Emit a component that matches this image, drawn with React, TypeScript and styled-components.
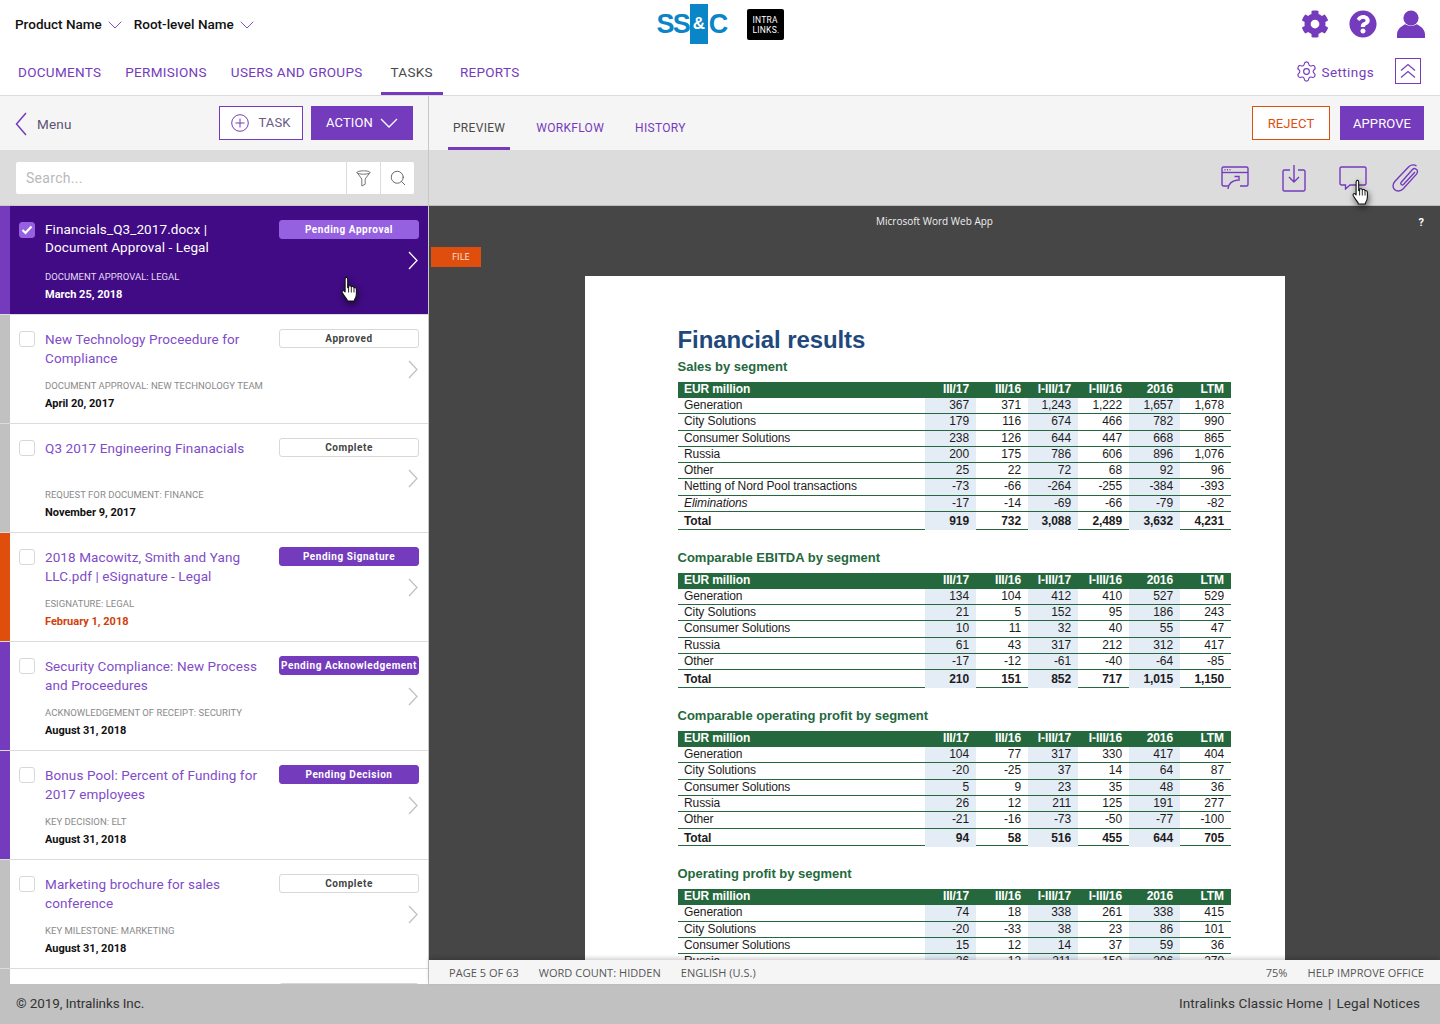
import React from 'react';
import styled, {createGlobalStyle} from 'styled-components';
import {Settings, Search, ChevronDown} from 'lucide-react';
import {FaCog, FaQuestionCircle} from 'react-icons/fa';

const purple = '#753bbd';
const lightPurple = '#9661e0';
const darkPurple = '#400b84';
const orange = '#e04e0e';
const uiFont = 'Roboto, "Noto Sans", sans-serif';
const docFont = '"Liberation Sans", Arial, sans-serif';

const GlobalStyle = createGlobalStyle`
  html, body {
    margin: 0;
    padding: 0;
    background: #fff;
  }
  * {
    box-sizing: border-box;
  }
`;

const Shell = styled.div`
  width: 1440px;
  height: 1024px;
  display: flex;
  flex-direction: column;
  overflow: hidden;
  position: relative;
  font-family: ${uiFont};
`;

const Header = styled.header`
  height: 96px;
  flex-shrink: 0;
  background: #fff;
  border-bottom: 1px solid #dcdcdc;
`;

const TopRow = styled.div`
  height: 48px;
  display: grid;
  grid-template-columns: 1fr auto 1fr;
  align-items: center;
  padding: 0 15px;
`;

const Crumbs = styled.div`
  display: flex;
  align-items: center;
`;

const Crumb = styled.span`
  display: flex;
  align-items: center;
  font-size: 13.5px;
  font-weight: 500;
  color: #111;
  margin-right: 7px;
  svg {
    color: ${purple};
    margin-left: 1px;
    margin-top: 2px;
  }
`;

const Logo = styled.div`
  display: flex;
  align-items: center;
  height: 40px;
`;

const LogoText = styled.span`
  font-family: ${docFont};
  font-weight: 700;
  font-size: 27px;
  letter-spacing: -1.8px;
  color: #0a85c7;
`;

const LogoBox = styled.span`
  width: 18px;
  height: 40px;
  margin-left: 1px;
  margin-right: 1px;
  background: #0a85c7;
  color: #fff;
  font-family: ${docFont};
  font-weight: 700;
  font-size: 17px;
  display: flex;
  align-items: center;
  justify-content: center;
`;

const LinksBox = styled.span`
  width: 37px;
  height: 31px;
  margin-left: 20px;
  background: #000;
  border-radius: 2px;
  color: #fff;
  font-family: ${uiFont};
  font-size: 8.5px;
  line-height: 10px;
  padding: 6px 0 0 6px;
  letter-spacing: 0.2px;
`;

const UserIcons = styled.div`
  display: flex;
  justify-content: flex-end;
  align-items: center;
  gap: 20px;
  color: ${purple};
  svg {
    display: block;
  }
`;

const NavRow = styled.div`
  height: 47px;
  display: flex;
  align-items: stretch;
  padding: 0 19px 0 8px;
`;

const NavTab = styled.a<{$active?: boolean}>`
  display: flex;
  align-items: center;
  padding: 3px 10px 0;
  margin-left: ${({$active}) => ($active ? '4px' : '0')};
  margin-right: ${({$active}) => ($active ? '7px' : '4px')};
  font-size: 13.5px;
  letter-spacing: 0.3px;
  color: ${({$active}) => ($active ? '#4a4a4a' : purple)};
  border-bottom: 3px solid ${({$active}) => ($active ? purple : 'transparent')};
`;

const NavRight = styled.div`
  margin-left: auto;
  display: flex;
  align-items: center;
  color: ${purple};
  font-size: 13.5px;
  letter-spacing: 0.4px;
  padding-bottom: 2px;
`;

const SettingsLink = styled.span`
  display: flex;
  align-items: center;
  gap: 4px;
  margin-right: 21px;
  margin-top: 2px;
`;

const CollapseBox = styled.span`
  width: 26px;
  height: 26px;
  border: 1px solid ${purple};
  display: flex;
  align-items: center;
  justify-content: center;
`;

const Main = styled.main`
  flex: 1;
  min-height: 0;
  display: flex;
`;

const Sidebar = styled.aside`
  width: 429px;
  flex-shrink: 0;
  display: flex;
  flex-direction: column;
  border-right: 1px solid #c8c8c8;
  background: #fff;
`;

const SideBar = styled.div`
  height: 54px;
  flex-shrink: 0;
  background: #f5f5f5;
  display: flex;
  align-items: center;
  padding: 0 15px;
`;

const BackLink = styled.span`
  display: flex;
  align-items: center;
  gap: 10px;
  font-size: 13.5px;
  color: #5f5273;
  letter-spacing: 0.2px;
  margin-top: 2px;
`;

const SideActions = styled.div`
  margin-left: auto;
  display: flex;
  gap: 8px;
  margin-top: -1px;
`;

const Button = styled.button<{$variant: 'outline' | 'solid' | 'danger'}>`
  height: 34px;
  display: flex;
  align-items: center;
  justify-content: center;
  font-family: ${uiFont};
  font-size: 13px;
  letter-spacing: 0.1px;
  cursor: pointer;
  background: ${({$variant}) => ($variant === 'solid' ? purple : '#fff')};
  color: ${({$variant}) =>
    $variant === 'solid' ? '#fff' : $variant === 'danger' ? orange : '#6a5a85'};
  border: 1px solid ${({$variant}) => ($variant === 'danger' ? orange : purple)};
  padding: 0;
`;

const TaskButton = styled(Button)`
  width: 84px;
  gap: 9px;
`;

const ActionButton = styled(Button)`
  width: 102px;
  gap: 7px;
`;

const SearchBand = styled.div`
  height: 56px;
  flex-shrink: 0;
  background: #dcdcdc;
  border-bottom: 1px solid #c8c8c8;
  padding: 12px 14px 0 16px;
`;

const SearchField = styled.div`
  height: 32px;
  background: #fff;
  border-radius: 2px;
  display: flex;
  align-items: stretch;
`;

const SearchInput = styled.span`
  flex: 1;
  display: flex;
  align-items: center;
  padding-left: 10px;
  font-size: 14px;
  letter-spacing: 0.3px;
  color: #b9b9b9;
`;

const SearchCell = styled.span`
  width: 34px;
  display: flex;
  align-items: center;
  justify-content: center;
  border-left: 1px solid #dcdcdc;
  color: #666;
`;

const TaskList = styled.div`
  flex: 1;
  min-height: 0;
  overflow: hidden;
`;

const TaskRow = styled.div<{$selected?: boolean}>`
  height: 109px;
  display: flex;
  background: ${({$selected}) => ($selected ? darkPurple : '#fff')};
  border-bottom: 1px solid #dcdcdc;
`;

const StatusStripe = styled.div<{$color: string}>`
  width: 10px;
  flex-shrink: 0;
  background: ${({$color}) => $color};
`;

const TaskBody = styled.div`
  flex: 1;
  display: grid;
  grid-template-columns: 16px 1fr 140px;
  column-gap: 10px;
  padding: 15px 9px 0;
`;

const Check = styled.span<{$checked?: boolean}>`
  width: 16px;
  height: 16px;
  margin-top: 1px;
  border-radius: 3px;
  display: flex;
  align-items: center;
  justify-content: center;
  background: ${({$checked}) => ($checked ? lightPurple : '#fff')};
  border: 1px solid ${({$checked}) => ($checked ? lightPurple : '#d8d8d8')};
`;

const TaskText = styled.div`
  min-width: 0;
`;

const TaskTitle = styled.div<{$selected?: boolean}>`
  height: 46px;
  font-size: 13.5px;
  letter-spacing: 0.1px;
  line-height: ${({$selected}) => ($selected ? '17.5px' : '19px')};
  color: ${({$selected}) => ($selected ? '#fff' : '#7f4cc8')};
`;

const TaskMeta = styled.div<{$selected?: boolean}>`
  margin-top: 3px;
  font-size: 9.5px;
  line-height: 14px;
  letter-spacing: 0.03px;
  text-transform: uppercase;
  color: ${({$selected}) => ($selected ? '#e6dcf5' : '#8a8a8a')};
`;

const TaskDate = styled.div<{$color: string}>`
  margin-top: 3px;
  font-size: 11px;
  font-weight: 700;
  line-height: 16px;
  color: ${({$color}) => $color};
`;

const TaskSide = styled.div`
  display: flex;
  flex-direction: column;
  align-items: flex-end;
  margin-top: -1px;
`;

const Badge = styled.span<{$tone: 'light' | 'solid' | 'plain'}>`
  width: 140px;
  height: 19px;
  border-radius: 3px;
  display: flex;
  align-items: center;
  justify-content: center;
  white-space: nowrap;
  font-size: 10px;
  font-weight: 700;
  letter-spacing: 0.55px;
  background: ${({$tone}) => ($tone === 'light' ? lightPurple : $tone === 'solid' ? purple : '#fff')};
  color: ${({$tone}) => ($tone === 'plain' ? '#444' : '#fff')};
  border: 1px solid ${({$tone}) => ($tone === 'light' ? lightPurple : $tone === 'solid' ? purple : '#d8d8d8')};
`;

const RowChevron = styled.svg`
  margin-top: 12px;
  margin-right: 1px;
`;

const Content = styled.section`
  flex: 1;
  min-width: 0;
  display: flex;
  flex-direction: column;
`;

const TabBar = styled.div`
  height: 54px;
  flex-shrink: 0;
  background: #f5f5f5;
  display: flex;
  align-items: stretch;
  padding: 0 16px 0 19px;
`;

const DocTab = styled.a<{$active?: boolean}>`
  display: flex;
  align-items: center;
  padding: 13px 5px 0;
  margin-right: 21px;
  font-size: 12px;
  letter-spacing: 0.3px;
  color: ${({$active}) => ($active ? '#4a4a4a' : purple)};
  border-bottom: 3px solid ${({$active}) => ($active ? purple : 'transparent')};
`;

const TabActions = styled.div`
  margin-left: auto;
  display: flex;
  align-items: center;
  gap: 10px;
`;

const RejectButton = styled(Button)`
  width: 78px;
`;

const ApproveButton = styled(Button)`
  width: 84px;
`;

const IconBar = styled.div`
  height: 56px;
  flex-shrink: 0;
  background: #dcdcdc;
  border-bottom: 1px solid #bdbdbd;
  display: flex;
  align-items: center;
  justify-content: flex-end;
  gap: 31px;
  padding-right: 20px;
  color: ${purple};
  svg {
    display: block;
  }
`;

const ClipWrap = styled.span`
  margin-left: -6px;
`;

const Viewer = styled.div`
  flex: 1;
  min-height: 0;
  background: #464646;
  display: flex;
  flex-direction: column;
  position: relative;
`;

const ViewerTitle = styled.div`
  height: 30px;
  flex-shrink: 0;
  display: flex;
  align-items: center;
  justify-content: center;
  color: #f0f0f0;
  font-family: "Open Sans", sans-serif;
  font-size: 10px;
`;

const ViewerHelp = styled.span`
  position: absolute;
  top: 10px;
  right: 16px;
  color: #fff;
  font-size: 11px;
  font-weight: 700;
`;

const FileRow = styled.div`
  height: 20px;
  margin: 11px 0 9px 2px;
  flex-shrink: 0;
`;

const FileTab = styled.span`
  width: 50px;
  height: 20px;
  display: flex;
  align-items: center;
  justify-content: center;
  padding: 0 0 2px 10px;
  background: ${orange};
  color: #f6e3da;
  font-family: "Open Sans", sans-serif;
  font-size: 9.5px;
`;

const Page = styled.div`
  flex: 1;
  min-height: 0;
  width: 700px;
  align-self: center;
  overflow: hidden;
  background: #fff;
  padding: 50px 54px 0 93px;
  font-family: ${docFont};
`;

const DocTitle = styled.h1`
  margin: 0 0 5px;
  font-size: 24px;
  line-height: 28px;
  font-weight: 700;
  letter-spacing: -0.1px;
  color: #1f497d;
`;

const SectionBlock = styled.div`
  margin-bottom: 20.3px;
`;

const SectionTitle = styled.h2`
  margin: 0 0 7px;
  font-size: 13px;
  line-height: 16px;
  font-weight: 700;
  color: #25683d;
`;

const Row = styled.div<{$head?: boolean; $total?: boolean}>`
  display: grid;
  grid-template-columns: 247px 51px 52px 50px 51px 51px 51px;
  height: ${({$head, $total}) => ($head ? '16px' : $total ? '17.5px' : '16.3px')};
  background: ${({$head}) => ($head ? '#25683d' : 'transparent')};
  color: ${({$head}) => ($head ? '#fff' : '#1c1c1c')};
  font-weight: ${({$head, $total}) => ($head || $total ? 700 : 400)};
  border-bottom: 1px solid #25683d;
  font-size: 12px;
  letter-spacing: -0.1px;
  line-height: ${({$total}) => ($total ? '18px' : '15px')};
`;

const LabelCell = styled.div<{$italic?: boolean}>`
  padding-left: 6.5px;
  white-space: nowrap;
  font-style: ${({$italic}) => ($italic ? 'italic' : 'normal')};
`;

const NumCell = styled.div<{$shaded?: boolean}>`
  text-align: right;
  padding-right: 6.5px;
  white-space: nowrap;
  background: ${({$shaded}) => ($shaded ? '#e4ecf6' : 'transparent')};
`;

const HeadCell = styled.div`
  text-align: right;
  padding-right: 6.5px;
  white-space: nowrap;
`;

const StatusBar = styled.div`
  height: 24px;
  flex-shrink: 0;
  background: #f5f5f5;
  box-shadow: 0 -2px 4px rgba(0, 0, 0, 0.18);
  position: relative;
  display: flex;
  align-items: center;
  padding: 0 16px 0 20px;
  gap: 20px;
  font-family: "Open Sans", sans-serif;
  font-size: 11px;
  letter-spacing: 0.03px;
  color: #555;
`;

const StatusRight = styled.span`
  margin-left: auto;
`;

const Footer = styled.footer`
  height: 40px;
  flex-shrink: 0;
  background: #c1c1c1;
  display: flex;
  align-items: center;
  justify-content: space-between;
  padding: 0 20px 2px 16px;
  font-size: 13.5px;
  letter-spacing: 0.1px;
  color: #333;
`;

const FooterCopy = styled.span`
  letter-spacing: -0.1px;
`;

const FooterSep = styled.span`
  margin: 0 5px;
`;

const Pointer = styled.svg<{$left: number; $top: number}>`
  position: absolute;
  left: ${({$left}) => $left}px;
  top: ${({$top}) => $top}px;
  filter: drop-shadow(1px 3px 3px rgba(0, 0, 0, 0.55));
`;

const Hand = ({left, top}: {left: number; top: number}) => (
  <Pointer $left={left} $top={top} width="22" height="28" viewBox="0 0 22 28">
    <path
      d="M6 2.200c1 0 1.700.7 1.700 1.800v8.600l.9-.1v-1.400c1.200-.7 2.300-.3 2.700.6 1.200-.5 2.300-.1 2.700.9 1.300-.3 2.400.5 2.400 1.800v4.800c0 2.400-1 4.100-2 5.800v1H7.200v-1c-1.200-2.200-3.500-4.400-5-7.400-.6-1.300.8-2.600 2-1.700l.9 1V4c0-1.100.8-1.800 1.900-1.800z"
      fill="#fff"
      stroke="#111"
      strokeWidth="1.100"
      strokeLinejoin="round"
    />
    <path d="M8.600 12.500v5M11.300 11.800v5.700M14 12.700v4.800" stroke="#111" strokeWidth="0.9" fill="none" />
  </Pointer>
);

const Chevron = ({color}: {color: string}) => (
  <RowChevron width="10" height="19" viewBox="0 0 10 19" fill="none">
    <path d="M1 1l8 8.500L1 18" stroke={color} strokeWidth="1.300" />
  </RowChevron>
);

type BadgeTone = 'light' | 'solid' | 'plain';

interface Task {
  title: string;
  meta: string;
  date: string;
  badge: string;
  tone: BadgeTone;
  stripe: string;
  overdue?: boolean;
  selected?: boolean;
}

const tasks: Task[] = [
  {
    title: 'Financials_Q3_2017.docx | Document Approval - Legal',
    meta: 'Document Approval: Legal',
    date: 'March 25, 2018',
    badge: 'Pending Approval',
    tone: 'light',
    stripe: purple,
    selected: true,
  },
  {
    title: 'New Technology Proceedure for Compliance',
    meta: 'Document Approval: New Technology Team',
    date: 'April 20, 2017',
    badge: 'Approved',
    tone: 'plain',
    stripe: '#c1c1c1',
  },
  {
    title: 'Q3 2017 Engineering Finanacials',
    meta: 'Request for Document: Finance',
    date: 'November 9, 2017',
    badge: 'Complete',
    tone: 'plain',
    stripe: '#c1c1c1',
  },
  {
    title: '2018 Macowitz, Smith and Yang LLC.pdf | eSignature - Legal',
    meta: 'eSignature: Legal',
    date: 'February 1, 2018',
    badge: 'Pending Signature',
    tone: 'solid',
    stripe: orange,
    overdue: true,
  },
  {
    title: 'Security Compliance: New Process and Proceedures',
    meta: 'Acknowledgement of Receipt: Security',
    date: 'August 31, 2018',
    badge: 'Pending Acknowledgement',
    tone: 'solid',
    stripe: purple,
  },
  {
    title: 'Bonus Pool: Percent of Funding for 2017 employees',
    meta: 'Key Decision: ELT',
    date: 'August 31, 2018',
    badge: 'Pending Decision',
    tone: 'solid',
    stripe: purple,
  },
  {
    title: 'Marketing brochure for sales conference',
    meta: 'Key Milestone: Marketing',
    date: 'August 31, 2018',
    badge: 'Complete',
    tone: 'plain',
    stripe: '#c1c1c1',
  },
  {
    title: '',
    meta: '',
    date: '',
    badge: 'Complete',
    tone: 'plain',
    stripe: '#c1c1c1',
  },
];

const columns = ['III/17', 'III/16', 'I-III/17', 'I-III/16', '2016', 'LTM'];

interface DocRow {
  label: string;
  values: string[];
  italic?: boolean;
  total?: boolean;
}

interface DocSection {
  title: string;
  rows: DocRow[];
}

const sections: DocSection[] = [
  {
    title: 'Sales by segment',
    rows: [
      {label: 'Generation', values: ['367', '371', '1,243', '1,222', '1,657', '1,678']},
      {label: 'City Solutions', values: ['179', '116', '674', '466', '782', '990']},
      {label: 'Consumer Solutions', values: ['238', '126', '644', '447', '668', '865']},
      {label: 'Russia', values: ['200', '175', '786', '606', '896', '1,076']},
      {label: 'Other', values: ['25', '22', '72', '68', '92', '96']},
      {label: 'Netting of Nord Pool transactions', values: ['-73', '-66', '-264', '-255', '-384', '-393']},
      {label: 'Eliminations', values: ['-17', '-14', '-69', '-66', '-79', '-82'], italic: true},
      {label: 'Total', values: ['919', '732', '3,088', '2,489', '3,632', '4,231'], total: true},
    ],
  },
  {
    title: 'Comparable EBITDA by segment',
    rows: [
      {label: 'Generation', values: ['134', '104', '412', '410', '527', '529']},
      {label: 'City Solutions', values: ['21', '5', '152', '95', '186', '243']},
      {label: 'Consumer Solutions', values: ['10', '11', '32', '40', '55', '47']},
      {label: 'Russia', values: ['61', '43', '317', '212', '312', '417']},
      {label: 'Other', values: ['-17', '-12', '-61', '-40', '-64', '-85']},
      {label: 'Total', values: ['210', '151', '852', '717', '1,015', '1,150'], total: true},
    ],
  },
  {
    title: 'Comparable operating profit by segment',
    rows: [
      {label: 'Generation', values: ['104', '77', '317', '330', '417', '404']},
      {label: 'City Solutions', values: ['-20', '-25', '37', '14', '64', '87']},
      {label: 'Consumer Solutions', values: ['5', '9', '23', '35', '48', '36']},
      {label: 'Russia', values: ['26', '12', '211', '125', '191', '277']},
      {label: 'Other', values: ['-21', '-16', '-73', '-50', '-77', '-100']},
      {label: 'Total', values: ['94', '58', '516', '455', '644', '705'], total: true},
    ],
  },
  {
    title: 'Operating profit by segment',
    rows: [
      {label: 'Generation', values: ['74', '18', '338', '261', '338', '415']},
      {label: 'City Solutions', values: ['-20', '-33', '38', '23', '86', '101']},
      {label: 'Consumer Solutions', values: ['15', '12', '14', '37', '59', '36']},
      {label: 'Russia', values: ['26', '12', '211', '150', '206', '270']},
    ],
  },
];

const TaskItem = ({task}: {task: Task}) => {
  const {selected} = task;
  const dateColor = selected ? '#fff' : task.overdue ? '#d0400a' : '#111';
  return (
    <TaskRow $selected={selected}>
      <StatusStripe $color={task.stripe} />
      <TaskBody>
        <Check $checked={selected}>
          {selected && (
            <svg width="12" height="10" viewBox="0 0 12 10" fill="none">
              <path d="M1.500 5l3 3 6-6.500" stroke="#fff" strokeWidth="2.200" />
            </svg>
          )}
        </Check>
        <TaskText>
          <TaskTitle $selected={selected}>{task.title}</TaskTitle>
          <TaskMeta $selected={selected}>{task.meta}</TaskMeta>
          <TaskDate $color={dateColor}>{task.date}</TaskDate>
        </TaskText>
        <TaskSide>
          <Badge $tone={task.tone}>{task.badge}</Badge>
          <Chevron color={selected ? '#fff' : '#c1c1c1'} />
        </TaskSide>
      </TaskBody>
    </TaskRow>
  );
};

const SegmentTable = ({section}: {section: DocSection}) => (
  <SectionBlock>
    <SectionTitle>{section.title}</SectionTitle>
    <Row $head>
      <LabelCell>EUR million</LabelCell>
      {columns.map(c => <HeadCell key={c}>{c}</HeadCell>)}
    </Row>
    {section.rows.map(r => (
      <Row key={r.label} $total={r.total}>
        <LabelCell $italic={r.italic}>{r.label}</LabelCell>
        {r.values.map((v, i) => (
          <NumCell key={columns[i]} $shaded={i % 2 === 0}>{v}</NumCell>
        ))}
      </Row>
    ))}
  </SectionBlock>
);

const App = () => (
  <Shell>
    <GlobalStyle />
    <Header>
      <TopRow>
        <Crumbs>
          <Crumb>Product Name<ChevronDown size={24} strokeWidth={0.9} /></Crumb>
          <Crumb>Root-level Name<ChevronDown size={24} strokeWidth={0.9} /></Crumb>
        </Crumbs>
        <Logo>
          <LogoText>SS</LogoText>
          <LogoBox>&amp;</LogoBox>
          <LogoText>C</LogoText>
          <LinksBox>INTRA<br />LINKS.</LinksBox>
        </Logo>
        <UserIcons>
          <FaCog size={28} />
          <FaQuestionCircle size={28} />
          <svg width="28" height="28" viewBox="0 0 28 28" fill="currentColor">
            <circle cx="14" cy="8" r="7.600" />
            <path d="M0 28v-3.500C0 19 5 15.500 8.500 14.200c1.600 1 3.500 1.500 5.500 1.500s3.900-.5 5.500-1.500C23 15.500 28 19 28 24.500V28z" />
          </svg>
        </UserIcons>
      </TopRow>
      <NavRow>
        <NavTab>DOCUMENTS</NavTab>
        <NavTab>PERMISIONS</NavTab>
        <NavTab>USERS AND GROUPS</NavTab>
        <NavTab $active>TASKS</NavTab>
        <NavTab>REPORTS</NavTab>
        <NavRight>
          <SettingsLink><Settings size={23} strokeWidth={1.200} />Settings</SettingsLink>
          <CollapseBox>
            <svg width="16" height="16" viewBox="0 0 16 16" fill="none" stroke={purple} strokeWidth="1.200">
              <path d="M1 7.500l7-6 7 6M1 14.500l7-6 7 6" />
            </svg>
          </CollapseBox>
        </NavRight>
      </NavRow>
    </Header>
    <Main>
      <Sidebar>
        <SideBar>
          <BackLink>
            <svg width="12" height="24" viewBox="0 0 12 24" fill="none">
              <path d="M11 1L1.500 12 11 23" stroke={purple} strokeWidth="1.500" />
            </svg>
            Menu
          </BackLink>
          <SideActions>
            <TaskButton $variant="outline">
              <svg width="18" height="18" viewBox="0 0 18 18" fill="none" stroke={purple} strokeWidth="1">
                <circle cx="9" cy="9" r="8.300" />
                <path d="M9 4.500v9M4.500 9h9" />
              </svg>
              TASK
            </TaskButton>
            <ActionButton $variant="solid">
              ACTION
              <svg width="18" height="10" viewBox="0 0 18 10" fill="none">
                <path d="M1 1l8 8 8-8" stroke="#fff" strokeWidth="1.300" />
              </svg>
            </ActionButton>
          </SideActions>
        </SideBar>
        <SearchBand>
          <SearchField>
            <SearchInput>Search...</SearchInput>
            <SearchCell>
              <svg width="15" height="17" viewBox="0 0 15 17" fill="none" stroke="#777" strokeWidth="1">
                <ellipse cx="7.500" cy="2.500" rx="6.500" ry="1.700" />
                <path d="M1 2.500l4.800 6.500v7l3.400-1.800V9L14 2.500" />
              </svg>
            </SearchCell>
            <SearchCell><Search size={18} strokeWidth={1.300} /></SearchCell>
          </SearchField>
        </SearchBand>
        <TaskList>
          {tasks.map((t, i) => <TaskItem key={i} task={t} />)}
        </TaskList>
      </Sidebar>
      <Content>
        <TabBar>
          <DocTab $active>PREVIEW</DocTab>
          <DocTab>WORKFLOW</DocTab>
          <DocTab>HISTORY</DocTab>
          <TabActions>
            <RejectButton $variant="danger">REJECT</RejectButton>
            <ApproveButton $variant="solid">APPROVE</ApproveButton>
          </TabActions>
        </TabBar>
        <IconBar>
          <svg width="28" height="24" viewBox="0 0 28 24" fill="none" stroke="currentColor" strokeWidth="1.400">
            <path d="M7 20H2.500A1.500 1.500 0 0 1 1 18.500v-16A1.500 1.500 0 0 1 2.500 1h23A1.500 1.500 0 0 1 27 2.500v16a1.500 1.500 0 0 1-1.500 1.500H19" />
            <path d="M1 6.500h26" />
            <path d="M3.500 3.700h1M6 3.700h1M8.500 3.700h1" />
            <path d="M7 23c.5-5 4-8.500 10-9M13.500 10.500h4.500V15" />
          </svg>
          <svg width="28" height="28" viewBox="0 0 28 28" fill="none" stroke="currentColor" strokeWidth="1.400">
            <path d="M10 6H4.500A1.500 1.500 0 0 0 3 7.500v18A1.500 1.500 0 0 0 4.500 27h19a1.500 1.500 0 0 0 1.500-1.500v-18A1.500 1.500 0 0 0 23.500 6H18" />
            <path d="M14 1v17M9 13l5 5 5-5" />
          </svg>
          <svg width="28" height="24" viewBox="0 0 28 24" fill="none" stroke="currentColor" strokeWidth="1.400">
            <path d="M2.500 1h23A1.500 1.500 0 0 1 27 2.500v15a1.500 1.500 0 0 1-1.500 1.500H11l-4.500 4V19h-4A1.500 1.500 0 0 1 1 17.500v-15A1.500 1.500 0 0 1 2.500 1z" />
          </svg>
          <ClipWrap>
            <svg width="28" height="28" viewBox="0 0 28 28" fill="none" stroke="currentColor" strokeWidth="1.400">
              <path d="M9 18.500L20.500 5.500c1.800-2 5-.5 5 2 0 1-.5 2-1 2.600L11 25c-2.500 2.600-6.500 2.500-8.500.5S.5 20 3 17.300L16.500 3C19 .3 22.500.5 24.500 2" />
              <path d="M9 18.500c-1 1.500 1 3.200 2.500 2L23 8" />
            </svg>
          </ClipWrap>
        </IconBar>
        <Viewer>
          <ViewerTitle>Microsoft Word Web App</ViewerTitle>
          <ViewerHelp>?</ViewerHelp>
          <FileRow><FileTab>FILE</FileTab></FileRow>
          <Page>
            <DocTitle>Financial results</DocTitle>
            {sections.map(s => <SegmentTable key={s.title} section={s} />)}
          </Page>
          <StatusBar>
            <span>PAGE 5 OF 63</span>
            <span>WORD COUNT: HIDDEN</span>
            <span>ENGLISH (U.S.)</span>
            <StatusRight>75%</StatusRight>
            <span>HELP IMPROVE OFFICE</span>
          </StatusBar>
        </Viewer>
      </Content>
    </Main>
    <Footer>
      <FooterCopy>© 2019, Intralinks Inc.</FooterCopy>
      <span>Intralinks Classic Home<FooterSep>|</FooterSep>Legal Notices</span>
    </Footer>
    <Hand left={340} top={275} />
    <Hand left={1351} top={178} />
  </Shell>
);

export default App;
